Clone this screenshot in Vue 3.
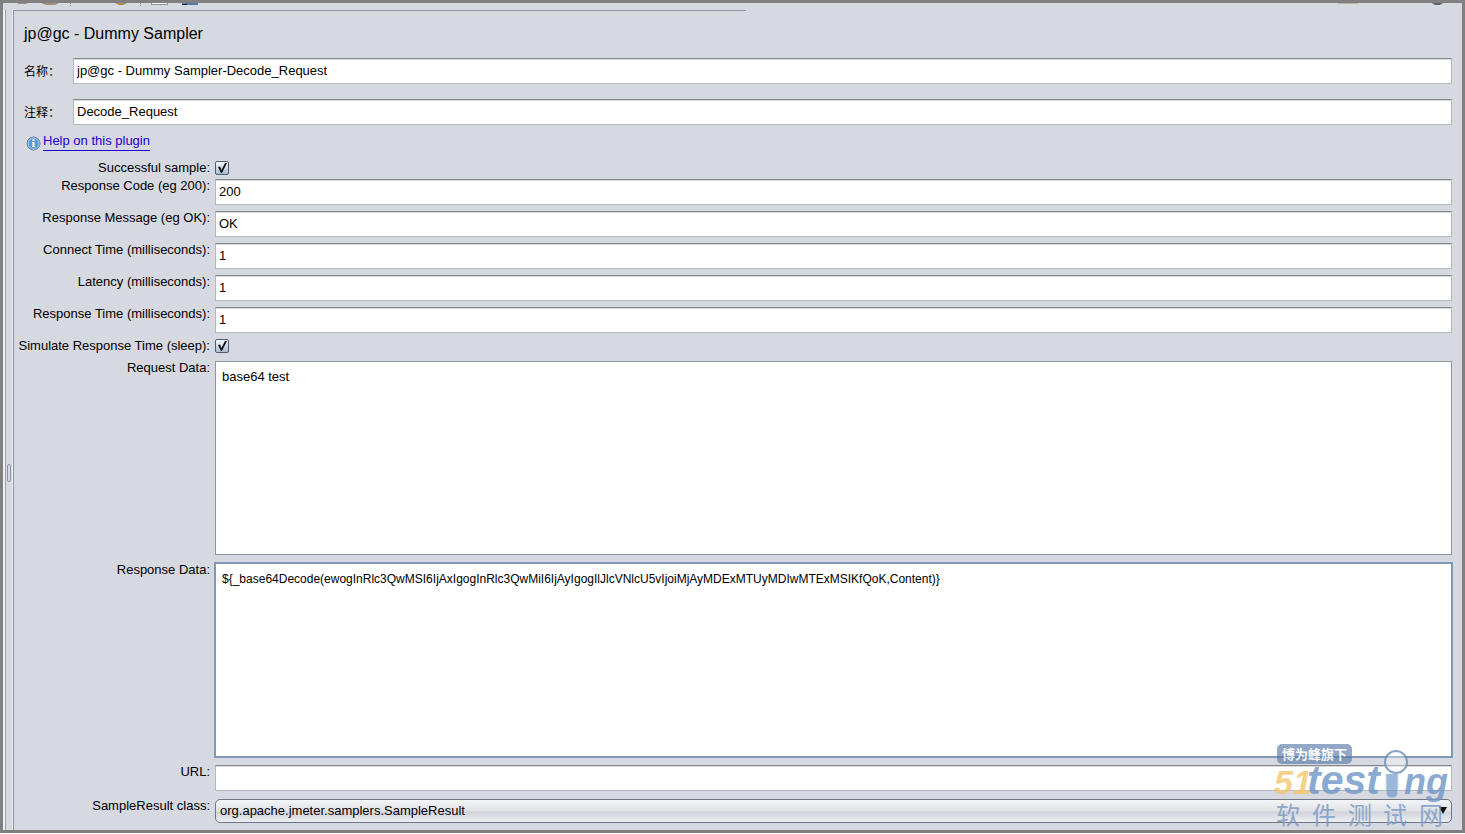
<script setup>
import { ref } from 'vue'

const name = ref('jp@gc - Dummy Sampler-Decode_Request')
const comment = ref('Decode_Request')
const fields = ref([
  { id: 'success', label: 'Successful sample:', kind: 'check', value: true },
  { id: 'code', label: 'Response Code (eg 200):', kind: 'text', value: '200' },
  { id: 'message', label: 'Response Message (eg OK):', kind: 'text', value: 'OK' },
  { id: 'connect', label: 'Connect Time (milliseconds):', kind: 'text', value: '1' },
  { id: 'latency', label: 'Latency (milliseconds):', kind: 'text', value: '1' },
  { id: 'time', label: 'Response Time (milliseconds):', kind: 'text', value: '1' },
  { id: 'sleep', label: 'Simulate Response Time (sleep):', kind: 'check', value: true },
  { id: 'request', label: 'Request Data:', kind: 'area', value: 'base64 test' },
  {
    id: 'response',
    label: 'Response Data:',
    kind: 'area',
    active: true,
    value: '${_base64Decode(ewogInRlc3QwMSI6IjAxIgogInRlc3QwMiI6IjAyIgogIlJlcVNlcU5vIjoiMjAyMDExMTUyMDIwMTExMSIKfQoK,Content)}',
  },
  { id: 'url', label: 'URL:', kind: 'text', value: '' },
  { id: 'class', label: 'SampleResult class:', kind: 'select', value: 'org.apache.jmeter.samplers.SampleResult' },
])
</script>

<template>
  <div class="window">
    <div class="toolbar">
      <svg class="tools" width="210" height="3" viewBox="0 0 210 3" aria-hidden="true">
        <path d="M14 0h11l-2 1h-7z" fill="#a08a78" />
        <path d="M38 0h18l-4 2h-9z" fill="#a18e7c" />
        <path d="M112 0h12l-4 2h-4z" fill="#a88c50" />
        <path d="M67.500 0v3M137.500 0v3" stroke="#8a8f99" stroke-dasharray="1 1" />
        <path d="M148 0h17v2h-17z" fill="#8a8f99" />
        <path d="M149 0h15v1h-15z" fill="#fff" />
        <path d="M179 0h16v2h-16z" fill="#5877ad" />
        <path d="M179 1h5v1h-5z" fill="#222" />
      </svg>
      <svg class="tools" width="124" height="3" viewBox="0 0 124 3" aria-hidden="true">
        <path d="M0 0h20v1H0z" fill="#b9b29c" />
        <path d="M94 0h11l-3 2h-5z" fill="#5d626c" />
      </svg>
    </div>
    <div class="body">
      <div class="divider"><span class="grip"></span></div>
      <main class="panel">
        <h1>jp@gc - Dummy Sampler</h1>
        <div class="head-row">
          <label for="name">名称：</label>
          <input id="name" v-model="name" type="text" />
        </div>
        <div class="head-row">
          <label for="comment">注释：</label>
          <input id="comment" v-model="comment" type="text" />
        </div>
        <div class="help">
          <svg width="15" height="15" viewBox="0 0 15 15" aria-hidden="true">
            <circle cx="7.500" cy="7.500" r="6.500" fill="#5d9bd3" stroke="#66809f" />
            <circle cx="7.500" cy="7.500" r="5.500" fill="none" stroke="#a9cdec" />
            <path d="M6.500 3h2v2h-2zM6 6h2.500v4H9v1H6v-1h.5V7H6z" fill="#fff" />
          </svg>
          <a href="#">Help on this plugin</a>
        </div>
        <form class="form" @submit.prevent>
          <template v-for="f in fields" :key="f.id">
            <label :for="f.id">{{ f.label }}</label>
            <div class="cell" :class="[f.kind, f.id]">
              <template v-if="f.kind === 'check'">
                <span class="tick">
                  <input :id="f.id" v-model="f.value" type="checkbox" />
                  <svg v-if="f.value" width="14" height="14" viewBox="0 0 14 14" aria-hidden="true">
                    <path d="M3 6l2-.5L6.500 9 10 2h2L7 12H6z" fill="#111" />
                  </svg>
                </span>
              </template>
              <input v-else-if="f.kind === 'text'" :id="f.id" v-model="f.value" type="text" />
              <textarea v-else-if="f.kind === 'area'" :id="f.id" v-model="f.value" :class="{ active: f.active }" spellcheck="false"></textarea>
              <span v-else class="combo">
                <select :id="f.id" v-model="f.value"><option>{{ f.value }}</option></select>
                <svg width="8" height="7" viewBox="0 0 8 7" aria-hidden="true"><path d="M0 0h8L4 7z" fill="#111" /></svg>
              </span>
            </div>
          </template>
        </form>
      </main>
    </div>
    <svg class="brand" width="180" height="90" viewBox="0 0 180 90">
      <rect x="5" y="4" width="75" height="20" rx="5" fill="#5878a8" fill-opacity=".8" />
      <text class="tag" x="10" y="19">博为峰旗下</text>
      <text class="logo digits" x="2" y="54">51</text>
      <text class="logo wide" x="35" y="54">test</text>
      <text class="logo" x="132" y="54">ng</text>
      <path d="M114 34v18q0 6 6 6t6-6V34" fill="#6f96c6" fill-opacity=".85" stroke="#c9d8ea" />
      <circle cx="124" cy="22" r="11" fill="#fff" fill-opacity=".45" stroke="#6f8fbd" stroke-width="2" />
      <text class="site" x="4 40 76 111 147" y="84">软件测试网</text>
    </svg>
  </div>
</template>

<style>
body {
  background: #fff;
}
</style>

<style scoped>
.window {
  position: relative;
  display: flex;
  flex-direction: column;
  box-sizing: border-box;
  height: calc(100vh - 1px);
  border: 3px solid #7f807f;
  background: #d6d9e0;
  color: #000;
  font: 13px/14px "Liberation Sans", Arial, "Noto Sans CJK SC", sans-serif;
}
.toolbar {
  display: flex;
  justify-content: space-between;
  height: 7px;
}
.body {
  display: flex;
  flex: 1;
  min-height: 0;
}
.divider {
  display: flex;
  align-items: center;
  justify-content: center;
  box-sizing: border-box;
  width: 11px;
  border-left: 2px solid #eef0f4;
  border-right: 1px solid #8b95a5;
  box-shadow: inset 1px 0 #9aa3b1, inset -1px 0 #eef0f4;
}
.grip {
  box-sizing: border-box;
  width: 4px;
  height: 18px;
  margin-top: 106px;
  border: 1px solid #8b95a5;
  border-radius: 2px;
}
.panel {
  display: flex;
  flex: 1;
  flex-direction: column;
  min-width: 0;
  padding: 14px 10px 7px;
  background: linear-gradient(#8e96ab, #8e96ab) left top / 732px 1px no-repeat;
}
h1 {
  margin: 0 0 14px;
  font-size: 16px;
  font-weight: 400;
  line-height: 20px;
}
.head-row {
  display: flex;
  align-items: center;
  margin-bottom: 15px;
}
.head-row label {
  width: 49px;
  padding-top: 2px;
  font-size: 12px;
}
input[type="text"],
textarea,
select {
  box-sizing: border-box;
  width: 100%;
  margin: 0;
  border: 1px solid #b4b7be;
  border-radius: 0;
  outline: none;
  background: #fff;
  color: #000;
  font: inherit;
}
input[type="text"] {
  height: 26px;
  padding: 0 4px 1px 3px;
  border-top: 1px solid #85878d;
  box-shadow: inset 0 1px #d9dade;
}
.head-row input[type="text"] {
  flex: 1;
  padding-bottom: 2px;
}
.help {
  display: flex;
  align-items: center;
  gap: 2px;
  margin: -6px 0 10px 2px;
}
.help svg {
  margin-top: 2px;
}
.help a {
  padding-bottom: 2px;
  border-bottom: 1px solid #1c00cf;
  color: #1c00cf;
  text-decoration: none;
}
.form {
  display: grid;
  flex: 1;
  grid-template-columns: 186px 1fr;
  grid-template-rows: repeat(7, auto) 1fr 1fr auto auto;
  column-gap: 5px;
}
.form > label {
  justify-self: end;
  white-space: nowrap;
}
.cell {
  display: flex;
  padding-bottom: 6px;
}
.cell.success {
  padding-bottom: 4px;
}
.cell.sleep,
.cell.area,
.cell.url {
  padding-bottom: 8px;
}
.cell.select {
  padding-bottom: 0;
}
.tick {
  position: relative;
  height: 14px;
}
.tick input {
  display: block;
  width: 14px;
  height: 14px;
  margin: 0;
  border: 1px solid #4c5d74;
  border-radius: 2px;
  appearance: none;
  background: linear-gradient(#f4f7fa, #a9bdd2);
}
.tick svg {
  position: absolute;
  top: 0;
  left: 0;
  pointer-events: none;
}
textarea {
  padding: 8px 6px;
  border-color: #9296a0;
  resize: none;
}
textarea.active {
  border-color: #7f9ab8;
  box-shadow: 0 0 0 1px #7f9ab8;
  font-size: 12px;
}
.combo {
  position: relative;
  width: 100%;
}
select {
  display: block;
  height: 24px;
  padding: 0 24px 0 4px;
  border: 1px solid #6f7581;
  border-radius: 5px;
  appearance: none;
  background: linear-gradient(#f4f5f7, #dfe1e6 50%, #d0d3da 55%, #eceef1);
}
.combo svg {
  position: absolute;
  top: 8px;
  right: 5px;
  pointer-events: none;
}
.brand {
  position: absolute;
  right: 10px;
  bottom: 0;
  opacity: .8;
  pointer-events: none;
}
.tag {
  fill: #fff;
  font: 700 13px "Noto Sans CJK SC", sans-serif;
}
.logo {
  fill: #6f96c6;
  font: italic 700 36px "Liberation Sans", Arial, sans-serif;
}
.logo.wide {
  font-size: 41px;
}
.logo.digits {
  fill: #f5c76c;
  font-family: "Liberation Sans Narrow", "Liberation Sans", sans-serif;
  font-size: 34px;
}
.site {
  fill: #7898c4;
  font: 24px "Noto Sans CJK SC", sans-serif;
}
</style>
